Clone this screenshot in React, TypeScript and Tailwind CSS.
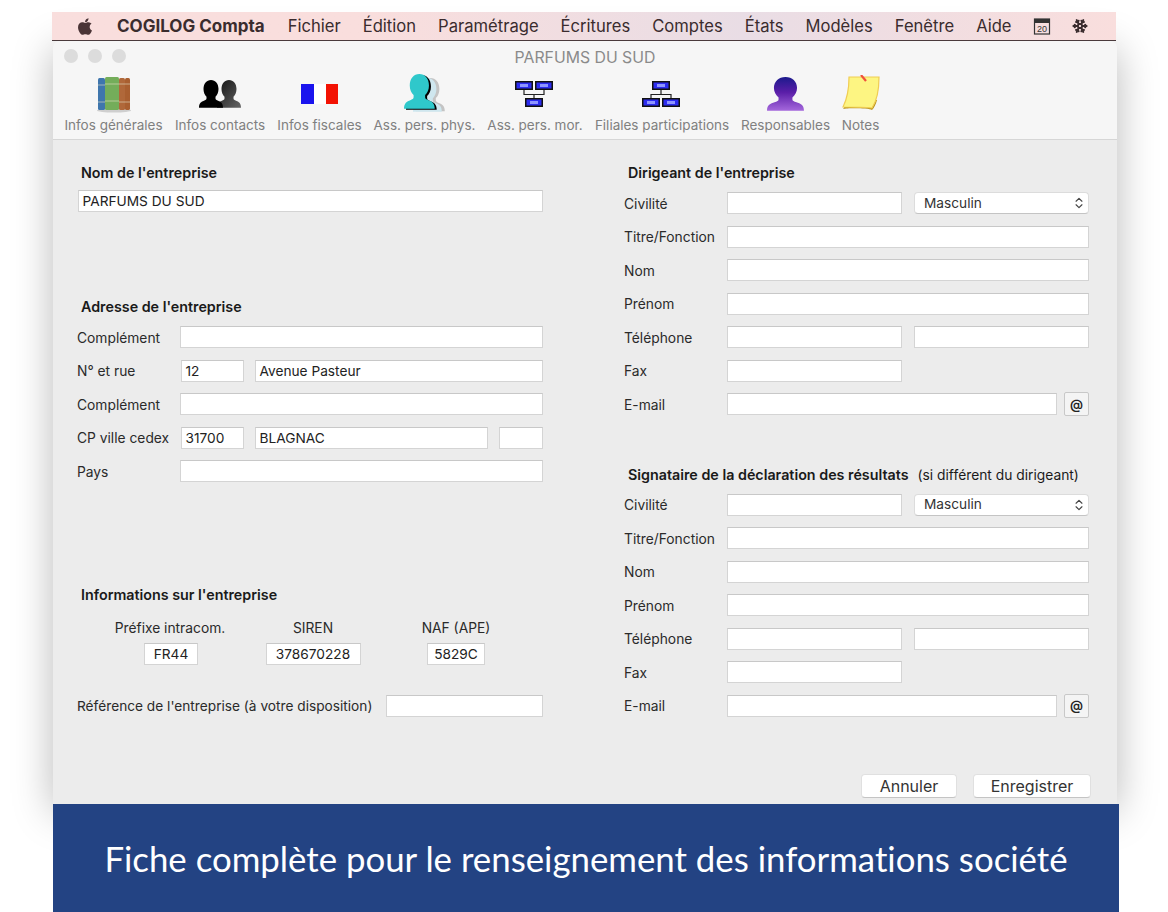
import * as React from 'react';
import { FaApple } from 'react-icons/fa';
import { ChevronsUpDown, Snowflake } from 'lucide-react';

const PERSON = 'M12 0c4.400 0 7.500 3.400 7.500 8.500 0 3-1.200 5.600-3 7.200v1.600c0 1 1 1.600 2.600 2.200 2.600 1 4.900 2 4.900 6.500H0c0-4.500 2.300-5.500 4.900-6.500 1.600-.6 2.600-1.200 2.600-2.200v-1.600c-1.800-1.600-3-4.200-3-7.200C4.500 3.400 7.600 0 12 0z';

function BooksIcon() {
  return (
    <svg width="36" height="38" viewBox="0 0 36 38">
      <ellipse cx="18" cy="35.500" rx="17" ry="2" fill="#cfcfcf" />
      <rect x="2" y="3" width="7" height="32" rx="1.500" fill="#3f76ad" />
      <rect x="9" y="2" width="14" height="33" rx="1.500" fill="#74ad5a" />
      <rect x="23" y="3" width="6" height="32" rx="1.500" fill="#b0683a" />
      <rect x="29" y="3" width="5" height="32" rx="1.500" fill="#a95f30" />
      <path d="M2 10h7M2 27h7M9 9h14M9 26h14M23 9h11M23 27h11" stroke="#e3dfc4" strokeWidth="1" opacity=".6" />
    </svg>
  );
}

function ContactsIcon() {
  return (
    <svg width="42" height="28" viewBox="0 0 42 28">
      <defs>
        <linearGradient id="contactFade" x1="0" y1="0" x2="1" y2="1">
          <stop offset="0" stopColor="#111" />
          <stop offset="1" stopColor="#666" />
        </linearGradient>
      </defs>
      <path d={PERSON} transform="translate(18 0) scale(1 1.070)" fill="url(#contactFade)" />
      <path d={PERSON} transform="translate(0 0) scale(1 1.070)" fill="#000" />
    </svg>
  );
}

function FlagIcon() {
  return (
    <svg width="37" height="20" viewBox="0 0 37 20">
      <rect x="0" y="0" width="13" height="20" fill="#1a14ee" />
      <rect x="13" y="0" width="12" height="20" fill="#ffffff" />
      <rect x="25" y="0" width="12" height="20" fill="#f31203" />
    </svg>
  );
}

function PhysIcon() {
  return (
    <svg width="42" height="40" viewBox="0 0 42 40">
      <path d={PERSON} transform="translate(12 4) scale(1.200 1.280)" fill="#c4c4c4" />
      <path d={PERSON} transform="translate(9 4) scale(1.200 1.300)" fill="#cfe7ef" />
      <path d={PERSON} transform="translate(2 1) scale(1.280 1.340)" fill="#000" />
      <path d={PERSON} transform="translate(0 0) scale(1.280 1.340)" fill="#2fc8cb" />
    </svg>
  );
}

function NetNode({ x, y }: { x: number; y: number }) {
  return (
    <g>
      <rect x={x} y={y} width="18" height="9" fill="#111" />
      <rect x={x + 1.500} y={y + 1.500} width="15" height="6" fill="#2c2cf0" />
      <rect x={x + 5} y={y + 3} width="8" height="3" fill="#8f96ff" />
    </g>
  );
}

function NetDownIcon() {
  return (
    <svg width="40" height="26" viewBox="0 0 40 26" className="-ml-[3px]">
      <path d="M10 9v4.500h20V9M20 13.500V17" stroke="#222" strokeWidth="1.200" fill="none" />
      <NetNode x={1} y={0} />
      <NetNode x={21} y={0} />
      <NetNode x={11} y={17} />
    </svg>
  );
}

function NetUpIcon() {
  return (
    <svg width="40" height="26" viewBox="0 0 40 26" className="-ml-[2px]">
      <path d="M20 9v4.500M10 17v-3.500h20V17" stroke="#222" strokeWidth="1.200" fill="none" />
      <NetNode x={11} y={0} />
      <NetNode x={1} y={17} />
      <NetNode x={21} y={17} />
    </svg>
  );
}

function ManagerIcon() {
  return (
    <svg width="37" height="34" viewBox="0 0 37 34">
      <defs>
        <linearGradient id="managerFill" x1="0" y1="0" x2="0" y2="1">
          <stop offset="0" stopColor="#1c1a8c" />
          <stop offset=".45" stopColor="#5a1ea8" />
          <stop offset="1" stopColor="#a568dc" />
        </linearGradient>
      </defs>
      <path d={PERSON} transform="translate(0 0) scale(1.540 1.300)" fill="url(#managerFill)" />
    </svg>
  );
}

function NoteIcon() {
  return (
    <svg width="40" height="38" viewBox="0 0 40 38">
      <path d="M2 34c4-1 26-1 29 1 2-2 4-6 5-10L9 24z" fill="#b8931a" />
      <path d="M8 2h30c0 10-1 22-7 31-9-1-20-1-29-1 4-8 6-20 6-30z" fill="#fdf582" stroke="#f0cd53" strokeWidth="1.200" />
      <path d="M20 0l5 6" stroke="#f0503c" strokeWidth="2.200" />
    </svg>
  );
}

const tools = [
  { label: 'Infos générales', w: 'w-[99px]', icon: <BooksIcon /> },
  { label: 'Infos contacts', w: 'w-[92px]', icon: <ContactsIcon /> },
  { label: 'Infos fiscales', w: 'w-[85px]', icon: <FlagIcon /> },
  { label: 'Ass. pers. phys.', w: 'w-[103px]', icon: <PhysIcon /> },
  { label: 'Ass. pers. mor.', w: 'w-[96px]', icon: <NetDownIcon /> },
  { label: 'Filiales participations', w: 'w-[136px]', icon: <NetUpIcon /> },
  { label: 'Responsables', w: 'w-[89px]', icon: <ManagerIcon /> },
  { label: 'Notes', w: 'w-[39px]', icon: <NoteIcon /> },
];

const menus = ['Fichier', 'Édition', 'Paramétrage', 'Écritures', 'Comptes', 'États', 'Modèles', 'Fenêtre', 'Aide'];

function Field({ className, value = '', center = false }: { className: string; value?: string; center?: boolean }) {
  return (
    <div
      className={`h-[22px] shrink-0 bg-white border border-[#d4d4d4] border-t-[#c8c8c8] px-[3.500px] text-[13.700px] leading-[20px] text-[#222] ${center ? 'text-center' : ''} ${className}`}
    >
      {value}
    </div>
  );
}

function SectionTitle({ children }: { children: React.ReactNode }) {
  return <div className="h-5 pl-1 text-[14.300px] leading-5 font-semibold text-[#1a1a1a] whitespace-nowrap">{children}</div>;
}

function Row({ label, labelW, children }: { label: string; labelW: string; children?: React.ReactNode }) {
  return (
    <div className="flex items-center h-[33.5px]">
      <div className={`shrink-0 pt-[2px] text-[13.800px] text-[#2a2a2a] whitespace-nowrap ${labelW}`}>{label}</div>
      {children}
    </div>
  );
}

function GenderSelect() {
  return (
    <div className="ml-3 w-[175px] h-[22px] shrink-0 flex items-center justify-between bg-white rounded-[4px] border border-[#dcdcdc] border-b-[#c4c4c4] pl-[9px] pr-[2px] text-[13.700px] text-[#333]">
      Masculin
      <ChevronsUpDown size={14} strokeWidth={2} className="text-[#444]" />
    </div>
  );
}

function PersonBlock() {
  const w = 'w-[103px]';
  return (
    <div>
      <Row label="Civilité" labelW={w}>
        <Field className="w-[175px]" />
        <GenderSelect />
      </Row>
      <Row label="Titre/Fonction" labelW={w}><Field className="w-[362px]" /></Row>
      <Row label="Nom" labelW={w}><Field className="w-[362px]" /></Row>
      <Row label="Prénom" labelW={w}><Field className="w-[362px]" /></Row>
      <Row label="Téléphone" labelW={w}>
        <Field className="w-[175px]" />
        <Field className="ml-3 w-[175px]" />
      </Row>
      <Row label="Fax" labelW={w}><Field className="w-[175px]" /></Row>
      <Row label="E-mail" labelW={w}>
        <Field className="w-[330px]" />
        <div className="ml-[7px] w-[25px] h-[24px] shrink-0 flex items-center justify-center bg-[#f4f4f4] border border-[#c8c8c8] rounded-[2px] text-[13px] font-semibold text-[#222]">@</div>
      </Row>
    </div>
  );
}

export default function App() {
  const lw = 'w-[103px]';
  return (
    <div className="w-[1168px] h-[912px] overflow-hidden bg-white pt-3 pl-[52px] font-['Inter','Liberation_Sans',sans-serif]">
      {/* Menu bar */}
      <div className="relative z-10 w-[1064px] h-[29px] flex items-center bg-gradient-to-r from-[#f9dedd] from-30% via-[#e9dde5] via-65% to-[#f9dedd] border-b border-[#4a3a3c] text-[16.600px] text-[#3a2c2e]">
        <FaApple className="ml-[24px] w-[18px] h-[19px] text-[#4a3436]" />
        <span className="ml-[23px] pt-px text-[17px] font-bold text-[#3a2c2e]">COGILOG Compta</span>
        <div className="ml-[23px] flex gap-[22px]">
          {menus.map((m) => (
            <span key={m}>{m}</span>
          ))}
        </div>
        <svg width="18" height="18" viewBox="0 0 18 18" className="ml-[21px]">
          <rect x="1.500" y="2" width="15" height="15" fill="none" stroke="#333" strokeWidth="1.200" />
          <rect x="1.500" y="2" width="15" height="4" fill="#333" />
          <text x="9" y="15" textAnchor="middle" fontSize="9" fill="#333" fontFamily="Liberation Sans">20</text>
        </svg>
        <Snowflake size={16} strokeWidth={2.800} className="ml-[21px] text-[#3a2c2e]" />
      </div>

      {/* Window */}
      <div className="ml-px w-[1064px] h-[763px] flex flex-col rounded-t-[6px] bg-[#ececec] shadow-[0_8px_40px_rgba(0,0,0,0.28)]">
        <div className="h-[99px] shrink-0 bg-[#f6f6f6] border-b border-[#d6d6d6] rounded-t-[6px]">
          <div className="relative h-[33px] flex items-center justify-center text-[15.800px] text-[#8a8a8a]">
            <div className="absolute left-[11px] top-[8px] flex gap-[10px]">
              <div className="w-[14px] h-[14px] rounded-full bg-[#dcdcdc]" />
              <div className="w-[14px] h-[14px] rounded-full bg-[#dcdcdc]" />
              <div className="w-[14px] h-[14px] rounded-full bg-[#dcdcdc]" />
            </div>
            PARFUMS DU SUD
          </div>
          <div className="flex gap-[11px] pl-[11px]">
            {tools.map((t) => (
              <div key={t.label} className={`flex flex-col items-center shrink-0 ${t.w}`}>
                <div className="h-[40px] flex items-center justify-center">{t.icon}</div>
                <div className="mt-[2px] text-[13.500px] leading-[18px] text-[#808080] whitespace-nowrap">{t.label}</div>
              </div>
            ))}
          </div>
        </div>

        <div className="flex gap-[81px] pl-6 pt-[23px]">
          {/* Left column */}
          <div className="w-[466px] shrink-0">
            <SectionTitle>Nom de l'entreprise</SectionTitle>
            <Field className="mt-[7px] ml-px w-[465px]" value="PARFUMS DU SUD" />

            <div className="mt-[85px]"><SectionTitle>Adresse de l'entreprise</SectionTitle></div>
            <div className="mt-[3.500px]">
              <Row label="Complément" labelW={lw}><Field className="w-[363px]" /></Row>
              <Row label="N° et rue" labelW={lw}>
                <Field className="ml-px w-[63px]" value="12" />
                <Field className="ml-[11px] w-[288px]" value="Avenue Pasteur" />
              </Row>
              <Row label="Complément" labelW={lw}><Field className="w-[363px]" /></Row>
              <Row label="CP ville cedex" labelW={lw}>
                <Field className="ml-px w-[63px]" value="31700" />
                <Field className="ml-[11px] w-[233px]" value="BLAGNAC" />
                <Field className="ml-[11px] w-[44px]" />
              </Row>
              <Row label="Pays" labelW={lw}><Field className="w-[363px]" /></Row>
            </div>

            <div className="mt-[96.500px]"><SectionTitle>Informations sur l'entreprise</SectionTitle></div>
            <div className="mt-[13px] flex text-[13.800px] leading-5 text-[#2a2a2a]">
              <div className="w-[186px] flex flex-col items-center">
                <span className="whitespace-nowrap">Préfixe intracom.</span>
                <Field className="mt-[5px] ml-[2px] w-[54px]" value="FR44" center />
              </div>
              <div className="w-[100px] flex flex-col items-center">
                <span>SIREN</span>
                <Field className="mt-[5px] w-[95px]" value="378670228" center />
              </div>
              <div className="ml-[43px] w-[100px] flex flex-col items-center">
                <span className="whitespace-nowrap">NAF (APE)</span>
                <Field className="mt-[5px] w-[58px]" value="5829C" center />
              </div>
            </div>
            <div className="mt-[30px] flex items-center justify-between">
              <span className="pt-px text-[13.700px] text-[#2a2a2a] whitespace-nowrap">Référence de l'entreprise (à votre disposition)</span>
              <Field className="w-[157px]" />
            </div>
          </div>

          {/* Right column */}
          <div className="w-[466px] shrink-0">
            <SectionTitle>Dirigeant de l'entreprise</SectionTitle>
            <div className="mt-[3.500px]"><PersonBlock /></div>
            <div className="mt-[43.500px]">
              <SectionTitle>
                Signataire de la déclaration des résultats
                <span className="ml-[9px] font-normal text-[13.800px]">(si différent du dirigeant)</span>
              </SectionTitle>
            </div>
            <div className="mt-[3.500px]"><PersonBlock /></div>
          </div>
        </div>

        <div className="mt-auto mb-[6px] pr-[26px] flex justify-end gap-4 text-[16px] text-[#333]">
          <div className="w-[96px] h-6 flex items-center justify-center bg-white rounded-[4px] border border-[#e0e0e0] border-b-[#c4c4c4]">Annuler</div>
          <div className="w-[118px] h-6 flex items-center justify-center bg-white rounded-[4px] border border-[#e0e0e0] border-b-[#c4c4c4]">Enregistrer</div>
        </div>
      </div>

      {/* Caption */}
      <div className="ml-px w-[1066px] h-[108px] pt-[3px] flex items-center justify-center bg-[#234383] text-[34.800px] text-white font-['Lato',sans-serif] [font-variant-ligatures:none] whitespace-nowrap">
        Fiche complète pour le renseignement des informations société
      </div>
    </div>
  );
}
